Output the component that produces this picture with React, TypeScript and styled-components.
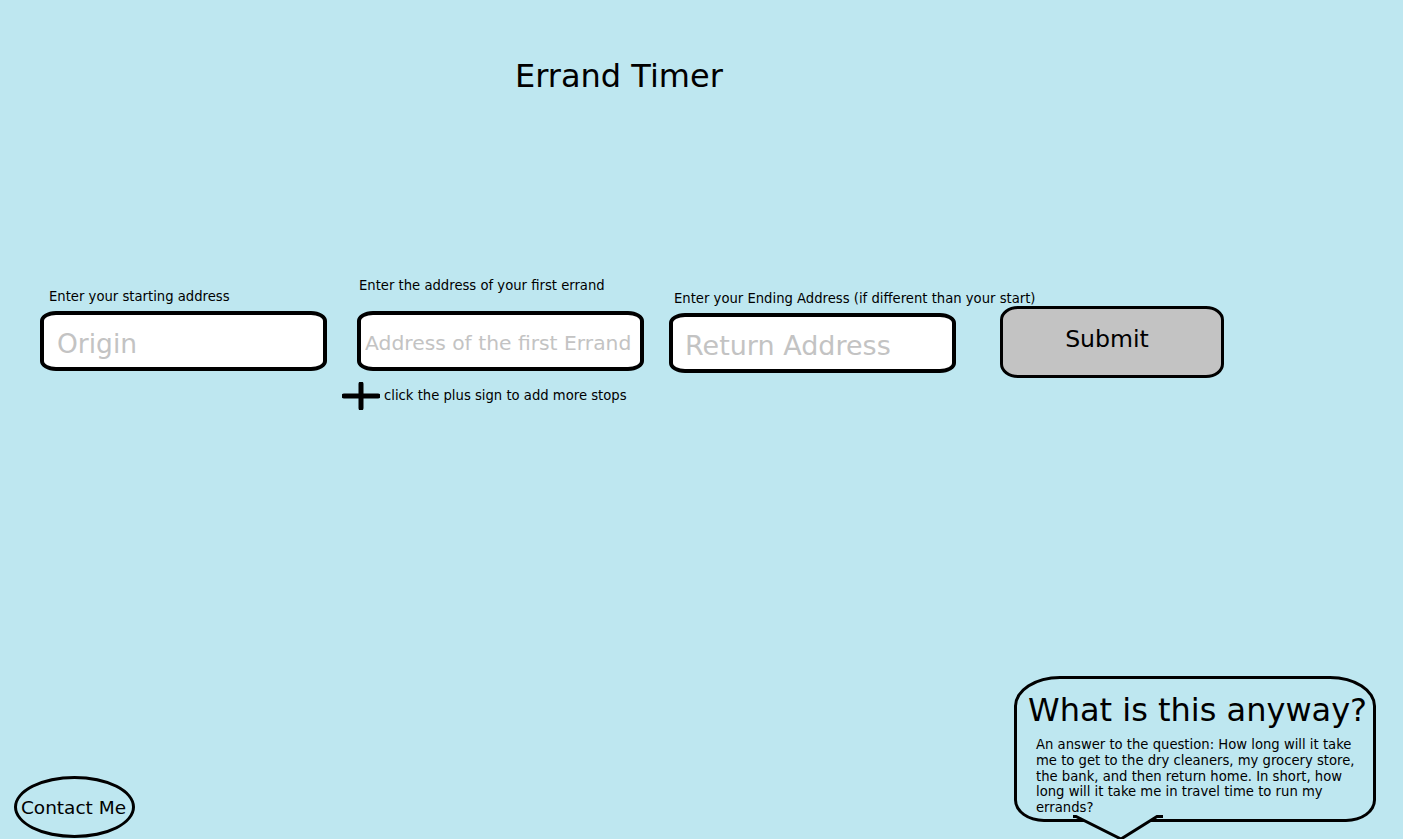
import * as React from 'react';
import styled, { createGlobalStyle } from 'styled-components';

const GlobalStyle = createGlobalStyle`
  html, body {
    margin: 0;
    padding: 0;
    background: #bee7f0;
    font-family: 'DejaVu Sans', Verdana, sans-serif;
    color: #000;
    overflow: hidden;
  }
`;

const Page = styled.div`
  display: flex;
  flex-direction: column;
  height: 839px;
  background: #bee7f0;
`;

const Header = styled.header`
  padding: 57px 0 0 515px;
`;

const Title = styled.h1`
  margin: 0;
  font-size: 32px;
  font-weight: normal;
  line-height: 38px;
`;

const FormRow = styled.div`
  display: flex;
  align-items: flex-start;
  margin-top: 184px;
  padding-left: 40px;
`;

interface FieldProps {
  $left: number;
}

const Field = styled.div<FieldProps>`
  display: flex;
  flex-direction: column;
  flex: none;
  width: 287px;
  margin-left: ${(p) => p.$left}px;
`;

interface LabelProps {
  $top: number;
  $indent: number;
}

const Label = styled.label<LabelProps>`
  display: block;
  margin-top: ${(p) => p.$top}px;
  padding-left: ${(p) => p.$indent}px;
  font-size: 13.2px;
  line-height: 14px;
  white-space: nowrap;
`;

interface AddressInputProps {
  $top: number;
  $size: number;
  $pad: number;
}

const AddressInput = styled.input<AddressInputProps>`
  box-sizing: border-box;
  width: 287px;
  height: 60px;
  margin-top: ${(p) => p.$top}px;
  padding: 4px 2px 0 ${(p) => p.$pad}px;
  border: 4px solid #000;
  border-radius: 16px / 10px;
  background: #fff;
  font-family: 'DejaVu Sans', Verdana, sans-serif;
  font-size: ${(p) => p.$size}px;
  outline: none;
  &::placeholder {
    color: #c3c3c3;
  }
`;

const AddStops = styled.div`
  display: flex;
  align-items: center;
  gap: 4px;
  margin: 11px 0 0 -15px;
  font-size: 13.2px;
  line-height: 14px;
  white-space: nowrap;
`;

const SubmitButton = styled.button`
  box-sizing: border-box;
  flex: none;
  width: 224px;
  height: 72px;
  margin: 27px 0 0 44px;
  border: 3px solid #000;
  border-radius: 18px / 14px;
  background: #c3c3c3;
  font-family: 'DejaVu Sans', Verdana, sans-serif;
  font-size: 23.6px;
  color: #000;
  padding: 0 10px 6px 0;
  cursor: pointer;
`;

const Footer = styled.footer`
  margin-top: auto;
  display: flex;
  justify-content: space-between;
  align-items: flex-end;
  padding: 0 27px 0 14px;
`;

const ContactButton = styled.button`
  box-sizing: border-box;
  width: 121px;
  height: 62px;
  margin-bottom: 1px;
  border: 3px solid #000;
  border-radius: 50%;
  background: transparent;
  font-family: 'DejaVu Sans', Verdana, sans-serif;
  font-size: 18.5px;
  color: #000;
  padding: 0 2px 0 0;
  white-space: nowrap;
  cursor: pointer;
`;

const Bubble = styled.div`
  position: relative;
  box-sizing: border-box;
  width: 362px;
  height: 146px;
  margin-bottom: 17px;
  padding: 12px 6px 0 11px;
  border: 3px solid #000;
  border-radius: 46px 46px 30px 30px / 30px 30px 22px 22px;
`;

const BubbleTitle = styled.h2`
  margin: 0;
  font-size: 32px;
  font-weight: normal;
  line-height: 38px;
  white-space: nowrap;
`;

const BubbleText = styled.p`
  margin: 8px 0 0 8px;
  width: 334px;
  font-size: 13.2px;
  line-height: 15.8px;
`;

const Tail = styled.svg`
  position: absolute;
  left: 56px;
  bottom: -22px;
`;

function PlusIcon() {
  return (
    <svg width="38" height="28" viewBox="0 0 38 28">
      <path d="M2 14 H36 M19 2 V26" stroke="#000" strokeWidth="5" strokeLinecap="round" />
    </svg>
  );
}

function App() {
  return (
    <Page>
      <GlobalStyle />
      <Header>
        <Title>Errand Timer</Title>
      </Header>
      <FormRow>
        <Field $left={0}>
          <Label $top={11} $indent={9}>Enter your starting address</Label>
          <AddressInput $top={7} $size={26.5} $pad={13} placeholder="Origin" />
        </Field>
        <Field $left={30}>
          <Label $top={0} $indent={2}>Enter the address of your first errand</Label>
          <AddressInput $top={18} $size={20.3} $pad={4} placeholder="Address of the first Errand" />
          <AddStops>
            <PlusIcon />
            <span>click the plus sign to add more stops</span>
          </AddStops>
        </Field>
        <Field $left={25}>
          <Label $top={13} $indent={5}>Enter your Ending Address (if different than your start)</Label>
          <AddressInput $top={7} $size={27} $pad={12} placeholder="Return Address" />
        </Field>
        <SubmitButton>Submit</SubmitButton>
      </FormRow>
      <Footer>
        <ContactButton>Contact Me</ContactButton>
        <Bubble>
          <BubbleTitle>What is this anyway?</BubbleTitle>
          <BubbleText>
            An answer to the question: How long will it take me to get to the dry cleaners, my
            grocery store, the bank, and then return home. In short, how long will it take me in
            travel time to run my errands?
          </BubbleText>
          <Tail width="90" height="26" viewBox="0 0 90 26">
            <path d="M0 1.5 H3 L48 24 L84 1.5 H90" fill="#bee7f0" stroke="#000" strokeWidth="3" />
          </Tail>
        </Bubble>
      </Footer>
    </Page>
  );
}

export default App;
